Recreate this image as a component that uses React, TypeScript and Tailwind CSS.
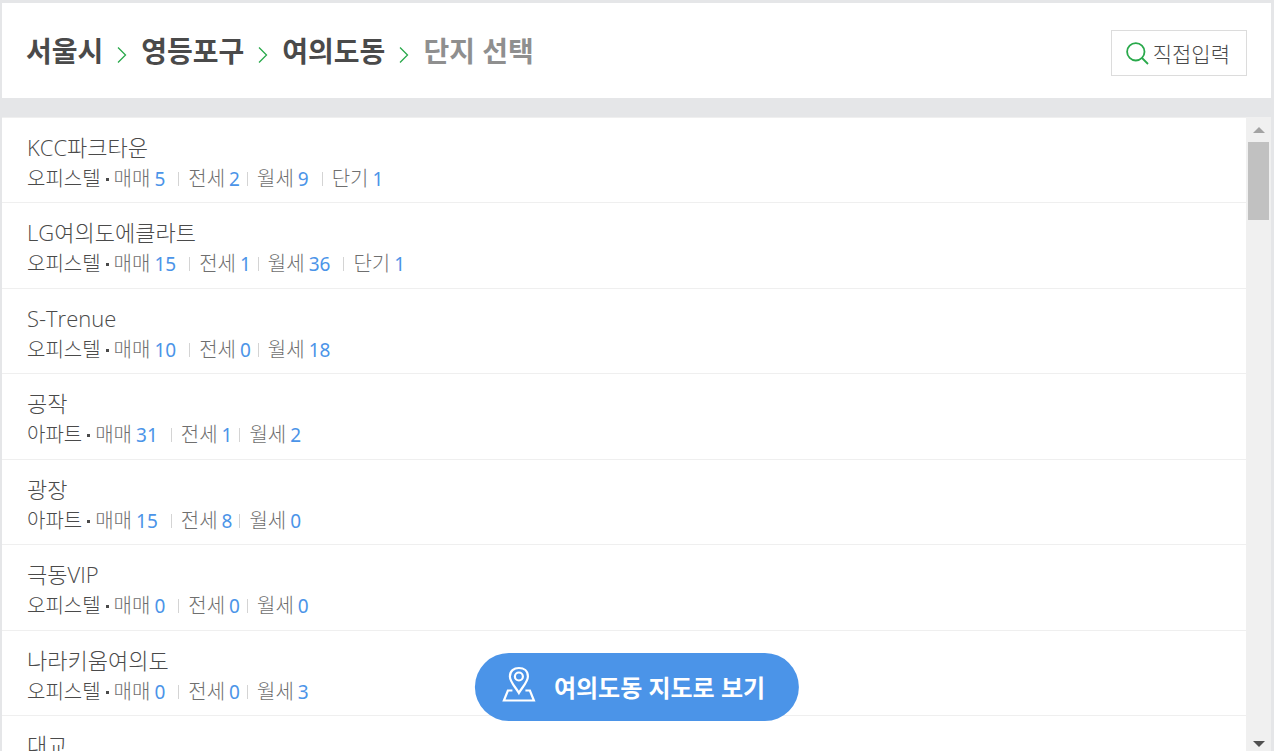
import { Fragment } from "react";

type Deal = { label: string; count: number };
type Complex = { name: string; kind: string; deals: Deal[] };

const LABELS = ["매매", "전세", "월세", "단기"];

const complex = (name: string, kind: string, ...counts: number[]): Complex => ({
  name,
  kind,
  deals: counts.map((count, i) => ({ label: LABELS[i], count }))
});

const complexes = [
  complex("KCC파크타운", "오피스텔", 5, 2, 9, 1),
  complex("LG여의도에클라트", "오피스텔", 15, 1, 36, 1),
  complex("S-Trenue", "오피스텔", 10, 0, 18),
  complex("공작", "아파트", 31, 1, 2),
  complex("광장", "아파트", 15, 8, 0),
  complex("극동VIP", "오피스텔", 0, 0, 0),
  complex("나라키움여의도", "오피스텔", 0, 0, 3),
  complex("대교", "아파트")
];

const regions = ["서울시", "영등포구", "여의도동"];

export default function App() {
  return (
    <div className="flex h-screen flex-col overflow-hidden bg-[#e5e6e8] pt-[3px] pr-[3px] pl-[2px] font-['Noto_Sans','Noto_Sans_CJK_KR',sans-serif] text-[#4a4a4a]">
      <header className="flex h-[95px] shrink-0 items-center justify-between bg-white px-6">
        <nav aria-label="지역 선택" className="flex items-center gap-[14px] text-[28px] leading-10 font-bold">
          {regions.map((region) => (
            <Fragment key={region}>
              <a href="#">{region}</a>
              <Chevron />
            </Fragment>
          ))}
          <span className="text-[#8f8f8f]">단지 선택</span>
        </nav>
        <button type="button" className="mt-1 flex h-[46px] items-center gap-1 border border-[#dcdcdc] bg-white pt-[2px] pr-4 pl-[14px] text-[21px] leading-8 font-light">
          <SearchIcon />
          직접입력
        </button>
      </header>

      <main className="mt-[19px] flex min-h-0 flex-1">
        <ul className="min-w-0 flex-1 overflow-y-auto border-t border-[#efefef] bg-white [scrollbar-width:none]">
          {complexes.map((item) => (
            <ComplexRow key={item.name} item={item} />
          ))}
        </ul>
        <Scrollbar />
      </main>

      <button
        type="button"
        className="fixed bottom-[30px] left-1/2 flex h-[68px] -translate-x-1/2 items-center gap-[18px] rounded-full bg-[#4b94e8] pt-[2px] pr-[34px] pl-[27px] text-2xl font-bold whitespace-nowrap text-white"
      >
        <MapPinIcon />
        여의도동 지도로 보기
      </button>
    </div>
  );
}

function ComplexRow({ item }: { item: Complex }) {
  return (
    <li className="border-b border-[#efefef] even:pb-px">
      <a href="#" className="block px-[25px] pt-[13px] pb-2">
        <h2 className="mb-px font-['Open_Sans','Noto_Sans_CJK_KR',sans-serif] text-[22px] leading-8 font-light">{item.name}</h2>
        <p className="flex items-center text-[20px] leading-[30px] font-light">
          <span>{item.kind}</span>
          <span className="mx-[5px] h-[3px] w-[3px] bg-[#4a4a4a]" />
          {item.deals.map((deal, i) => (
            <Fragment key={deal.label}>
              {i > 0 && <span className={`${i === 2 ? "ml-[7px]" : "ml-[13px]"} mr-[9px] h-[14px] w-px bg-[#d4d4d4]`} />}
              <span className="text-[#6f6f6f]">{deal.label}</span>
              <span className="ml-1 text-[19px] font-normal text-[#4b94e8]">{deal.count}</span>
            </Fragment>
          ))}
        </p>
      </a>
    </li>
  );
}

function Scrollbar() {
  return (
    <div aria-hidden="true" className="flex w-[25px] flex-col items-center bg-[#f0f0f0]">
      <svg className="mt-[10px] shrink-0" width="12" height="6" viewBox="0 0 12 6" fill="#a3a3a3">
        <path d="M6 0L12 6H0Z" />
      </svg>
      <div className="mt-[9px] h-[78px] w-[21px] bg-[#c1c1c1]" />
      <svg className="mt-auto mb-1 shrink-0" width="12" height="6" viewBox="0 0 12 6" fill="#505050">
        <path d="M0 0H12L6 6Z" />
      </svg>
    </div>
  );
}

function Chevron() {
  return (
    <svg className="mt-2 shrink-0" width="10" height="16" viewBox="0 0 10 16" fill="none" stroke="#29a94b" strokeWidth="1.3" aria-hidden="true">
      <path d="M1 .5L8.5 8L1 15.5" />
    </svg>
  );
}

function SearchIcon() {
  return (
    <svg className="shrink-0" width="23" height="23" viewBox="0 0 23 23" fill="none" stroke="#29a94b" strokeWidth="1.8" aria-hidden="true">
      <circle cx="9.8" cy="9.8" r="8.7" />
      <path d="M16 16L22 22" />
    </svg>
  );
}

function MapPinIcon() {
  return (
    <svg className="-mt-2 shrink-0" width="34" height="36" viewBox="0 0 34 36" fill="none" stroke="white" strokeWidth="2.2" aria-hidden="true">
      <path d="M17 27C14 21.5 8 16 8 10.5C8 5 12 2 17 2S26 5 26 10.5C26 16 20 21.5 17 27Z" />
      <circle cx="17" cy="10.5" r="4" />
      <path d="M10.5 24.5H6L2 34.5H32L28 24.5H23.5" />
    </svg>
  );
}
